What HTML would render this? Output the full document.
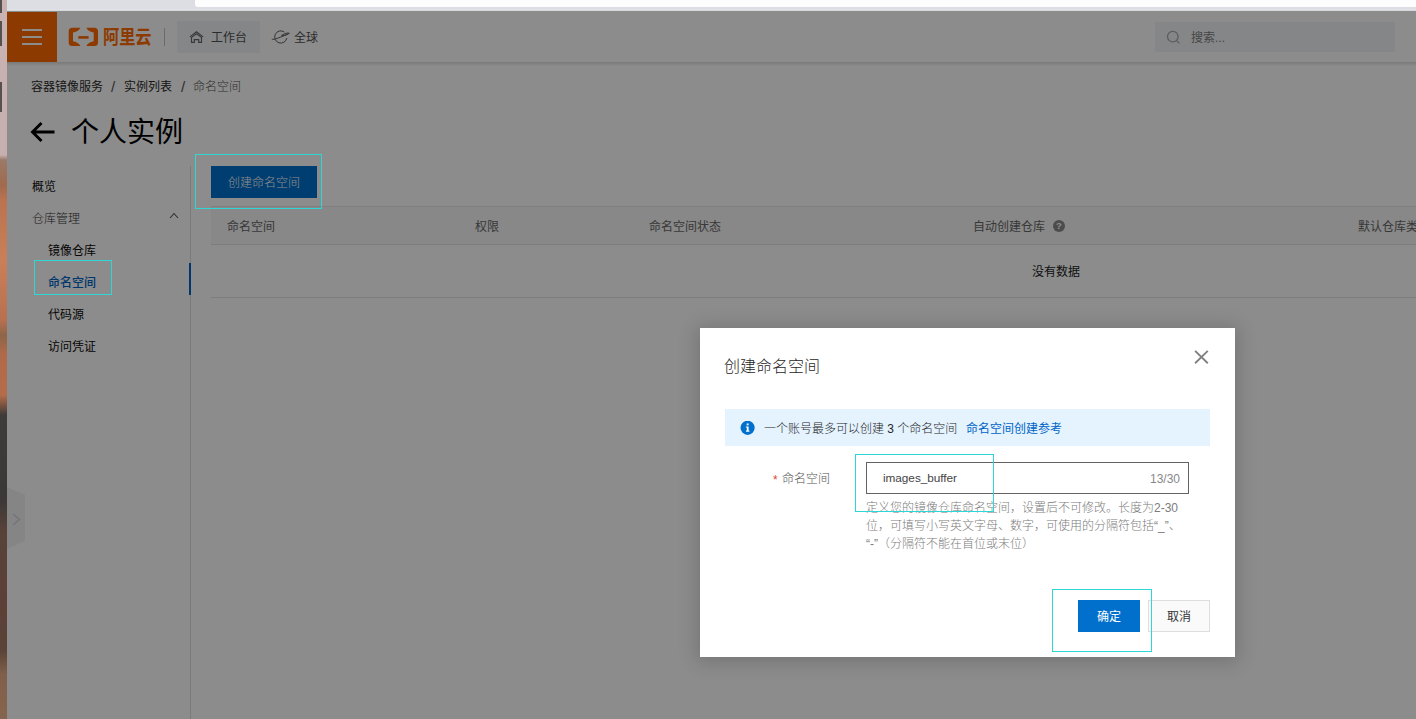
<!DOCTYPE html>
<html lang="zh-CN">
<head>
<meta charset="utf-8">
<title>容器镜像服务</title>
<style>
*{box-sizing:border-box;margin:0;padding:0}
html,body{width:1416px;height:719px;overflow:hidden}
body{position:relative;background:#fff;font-family:"Liberation Sans","Noto Sans CJK SC",sans-serif;font-size:12px;color:#1a1a1a;line-height:1;font-weight:300}
.abs{position:absolute}
.t{position:absolute;white-space:nowrap;line-height:1;margin-top:1px}
/* browser chrome strip */
#chrome{left:0;top:0;width:1416px;height:11px;background:linear-gradient(180deg,#dcdee3 0,#dcdee3 9px,#e6e7ea 10px,#c8c9cc 11px)}
#chrome .tab{position:absolute;left:195px;top:0;right:0;height:7px;background:#fdfdfd;border-bottom-left-radius:3px}
/* desktop strip */
#desk{left:0;top:0;width:7px;height:719px;background:linear-gradient(180deg,#c9b3b3 0px,#c6afae 155px,#9a7a68 160px,#a06a4e 185px,#ba7350 200px,#c98058 260px,#b87050 320px,#8e6549 335px,#b06a4a 355px,#b56c4b 395px,#3e3b38 415px,#3c3836 500px,#57423a 530px,#5c4037 600px,#5a4338 650px,#80604a 675px,#85654e 719px)}
#desk i{position:absolute;left:0;width:2px;background:#56504f}
/* header */
#hdr{left:7px;top:11px;width:1409px;height:51px;background:#fff}
#menu{left:7px;top:12px;width:50px;height:50px;background:#ff6a00}
#menu i{position:absolute;left:15px;width:20px;height:2px;background:#fff}

/* underlying page */
#logo{left:68px;top:27px;width:31px;height:20px}
#brand{left:103px;top:26.4px;font-size:16.2px;font-weight:700;color:#ff6a00;transform-origin:0 0;transform:scaleY(1.18);letter-spacing:0}
#sep{left:164px;top:28px;width:1px;height:18px;background:#c4c4c4}
#work{left:177px;top:21px;width:83px;height:32px;background:#f2f4f7;border-radius:2px}
.hd{font-size:12px;color:#505050;font-weight:400}
#search{left:1155px;top:22px;width:240px;height:30px;background:#f2f4f7}
#hshadow{left:7px;top:62px;width:1409px;height:4px;background:linear-gradient(180deg,rgba(0,0,0,.13),rgba(0,0,0,0))}
.bc{font-size:12px;color:#2a2a2a;top:80px;font-weight:400}
#title{left:71px;top:118px;font-size:28px;color:#000;font-weight:400}
.nav{font-size:12px;color:#0a0a0a;font-weight:400}
#sideline{left:190px;top:166px;width:1px;height:553px;background:#dedede}
#active{left:189px;top:263px;width:2px;height:32px;background:#0064c8}
#cbtn{left:211px;top:166px;width:106px;height:32px;background:#0070cc;color:#fff;font-size:12px;text-align:center;line-height:34px}
#thead{left:211px;top:206px;width:1205px;height:39px;background:#f7f7f7;border-top:1px solid #e8e8e8;border-bottom:1px solid #e3e3e3}
.th{font-size:12px;color:#666;top:219.6px;font-weight:400}
#rowline{left:211px;top:297px;width:1205px;height:1px;background:#e3e3e3}
#toggle{left:7px;top:487px;width:18px;height:62px;background:#f2f2f2;clip-path:polygon(0 0,100% 13%,100% 87%,0 100%)}
#mask{left:7px;top:11px;width:1409px;height:708px;background:rgba(0,0,0,.45)}
/* dialog */
#dlg{left:700px;top:328px;width:535px;height:329px;background:#fff;box-shadow:0 2px 18px 3px rgba(0,0,0,.17)}
#dlg .t{color:#262626}
#dtitle{left:24px;top:30px;font-size:16px;color:#262626}
#info{left:25px;top:81px;width:485px;height:37px;background:#e4f3fe}
#inp{left:166px;top:134px;width:323px;height:32px;border:1px solid #636363;background:#fff}
#help{text-spacing-trim:space-all;left:166px;top:171px;width:330px;font-size:12px;line-height:18px;color:#7c7c7c;white-space:nowrap}
#ok{left:378px;top:272px;width:62px;height:32px;background:#0070cc;color:#fff;font-size:12px;font-weight:400;text-align:center;line-height:34px}
#cancel{left:448px;top:272px;width:62px;height:32px;background:#fafafa;border:1px solid #dedede;color:#333;font-size:12px;font-weight:400;text-align:center;line-height:32px}
.cyan{position:absolute;border:1px solid #2fd6d6}
</style>
</head>
<body>
<div id="hdr" class="abs"></div>
<div id="menu" class="abs"><i style="top:17px"></i><i style="top:24px"></i><i style="top:31px"></i></div>
<svg id="logo" class="abs" viewBox="0 0 31 20"><path fill="#ff6a00" d="M12.3 0.8H4.3Q0.7 0.8 0.7 4.4V15.5Q0.7 19.1 4.3 19.1H12.3Q11.2 15.8 5 14.3V5.6Q11.2 4.2 12.3 0.8Z"/><path fill="#ff6a00" d="M18.4 0.8H26.4Q30 0.8 30 4.4V15.5Q30 19.1 26.4 19.1H18.4Q19.5 15.8 25.7 14.3V5.6Q19.5 4.2 18.4 0.8Z"/><rect x="10.3" y="9.1" width="10.3" height="2.6" fill="#ff6a00"/></svg>
<div id="brand" class="t">阿里云</div>
<div id="sep" class="abs"></div>
<div id="work" class="abs"></div>
<svg class="abs" style="left:189px;top:30px" width="15" height="14" viewBox="0 0 15 14"><path d="M0.9 6.9L7.5 1.8L14.1 6.9" fill="none" stroke="#666" stroke-width="1.15"/><path d="M2.5 7.4L7.5 3.7L12.5 7.4V12.4H9.7V9.6H5.3V12.4H2.5Z" fill="none" stroke="#666" stroke-width="1.15"/></svg>
<div class="t hd" style="left:211px;top:31px">工作台</div>
<svg class="abs" style="left:271px;top:29px" width="20" height="16" viewBox="0 0 20 16"><path d="M13.3 3A6.1 6.1 0 1 0 15.8 9" fill="none" stroke="#606060" stroke-width="1"/><path d="M0.8 10.1C2.5 11.2 9 8.6 18.3 4.3C16.6 3.4 13.4 4.6 10.6 6.4C12 7.2 15 6.2 17.6 4.6" fill="none" stroke="#606060" stroke-width="1"/></svg>
<div class="t hd" style="left:294px;top:31px">全球</div>
<div id="search" class="abs"></div>
<svg class="abs" style="left:1166px;top:30px" width="15" height="15" viewBox="0 0 15 15"><circle cx="6.8" cy="6.6" r="5.3" fill="none" stroke="#a8a8ac" stroke-width="1.3"/><path d="M10.6 10.6L13.4 13.4" stroke="#a8a8ac" stroke-width="1.3"/></svg>
<div class="t" style="left:1191px;top:31px;font-size:12px;color:#808080;font-weight:400">搜索...</div>
<div id="hshadow" class="abs"></div>

<div class="t bc" style="left:31px">容器镜像服务</div>
<div class="t bc" style="left:111px;color:#555;font-size:15px;top:78px">/</div>
<div class="t bc" style="left:124px">实例列表</div>
<div class="t bc" style="left:181px;color:#555;font-size:15px;top:78px">/</div>
<div class="t bc" style="left:193px;color:#555;font-weight:300">命名空间</div>
<svg class="abs" style="left:30px;top:121px" width="26" height="22" viewBox="0 0 26 22"><path d="M24.5 11H3M11.5 2L2.5 11L11.5 20" fill="none" stroke="#000" stroke-width="2.9"/></svg>
<div id="title" class="t">个人实例</div>

<div class="t nav" style="left:32px;top:180px;color:#111">概览</div>
<div class="t nav" style="left:32px;top:212px;color:#333;font-weight:300">仓库管理</div>
<svg class="abs" style="left:169px;top:212px" width="10" height="7" viewBox="0 0 10 7"><path d="M1 6L5 1.5L9 6" fill="none" stroke="#555" stroke-width="1.1"/></svg>
<div class="t nav" style="left:48px;top:244px">镜像仓库</div>
<div class="t nav" style="left:48px;top:276px;color:#0064c8;font-weight:500">命名空间</div>
<div class="t nav" style="left:48px;top:308px">代码源</div>
<div class="t nav" style="left:48px;top:340px">访问凭证</div>
<div id="sideline" class="abs"></div>
<div id="active" class="abs"></div>
<div id="toggle" class="abs"></div>
<svg class="abs" style="left:12px;top:513px" width="9" height="13" viewBox="0 0 9 13"><path d="M1 1L7.5 6.5L1 12" fill="none" stroke="#ccd2dc" stroke-width="1.2"/></svg>

<div id="cbtn" class="abs">创建命名空间</div>
<div id="thead" class="abs"></div>
<div class="t th" style="left:227px">命名空间</div>
<div class="t th" style="left:475px">权限</div>
<div class="t th" style="left:649px">命名空间状态</div>
<div class="t th" style="left:973px">自动创建仓库</div>
<svg class="abs" style="left:1053px;top:219.5px" width="12" height="12" viewBox="0 0 12 12"><circle cx="6" cy="6" r="6" fill="#8a8a8a"/><text x="6" y="9.4" font-size="9.5" font-weight="700" text-anchor="middle" fill="#fff" font-family="Liberation Sans, sans-serif">?</text></svg>
<div class="t th" style="left:1358px">默认仓库类型</div>
<div class="t" style="left:1032px;top:265px;font-size:12px;color:#222;font-weight:400">没有数据</div>
<div id="rowline" class="abs"></div>

<div id="mask" class="abs"></div>

<div id="dlg" class="abs">
  <div id="dtitle" class="t">创建命名空间</div>
  <svg class="abs" style="left:494px;top:22px" width="15" height="15" viewBox="0 0 15 15"><path d="M1.1 0.9L13.8 13.2M13.8 0.9L1.1 13.2" stroke="#808080" stroke-width="1.9" fill="none"/></svg>
  <div id="info" class="abs"></div>
  <svg class="abs" style="left:40px;top:93px" width="15" height="15" viewBox="0 0 15 15"><circle cx="7.6" cy="6.8" r="7.1" fill="#0070cc"/><rect x="6.7" y="2.5" width="1.9" height="1.8" fill="#fff"/><path d="M5.9 5.4H8.6V9.6H9.4V10.8H6V9.6H6.8V6.5H5.9Z" fill="#fff"/></svg>
  <div class="t" style="left:64px;top:94px;font-size:12px">一个账号最多可以创建 3 个命名空间</div>
  <div class="t" style="left:266px;top:94px;font-size:12px;color:#0064c8;font-weight:400">命名空间创建参考</div>
  <div class="t" style="left:73px;top:145px;font-size:12px;color:#e1452e">*</div>
  <div class="t" style="left:82px;top:144px;font-size:12px;color:#555">命名空间</div>
  <div id="inp" class="abs"></div>
  <div class="t" style="left:183px;top:144px;font-size:11.8px;color:#444;letter-spacing:-0.05px">images_buffer</div>
  <div class="t" style="left:450px;top:144px;font-size:12px;color:#888">13/30</div>
  <div id="help" class="abs">定义您的镜像仓库命名空间，设置后不可修改。长度为2-30<br>位，可填写小写英文字母、数字，可使用的分隔符包括“_”、<br>“-”（分隔符不能在首位或末位）</div>
  <div id="ok" class="abs">确定</div>
  <div id="cancel" class="abs">取消</div>
</div>

<div class="cyan" style="left:195px;top:154px;width:127px;height:55px"></div>
<div class="cyan" style="left:34px;top:260px;width:78px;height:35px"></div>
<div class="cyan" style="left:855px;top:454px;width:139px;height:58px"></div>
<div class="cyan" style="left:1052px;top:589px;width:100px;height:63px"></div>

<div id="chrome" class="abs"><div class="tab"></div></div>
<div id="desk" class="abs"><i style="top:0;height:13px"></i><i style="top:21px;height:25px"></i><i style="top:82px;height:30px"></i></div>
</body>
</html>
